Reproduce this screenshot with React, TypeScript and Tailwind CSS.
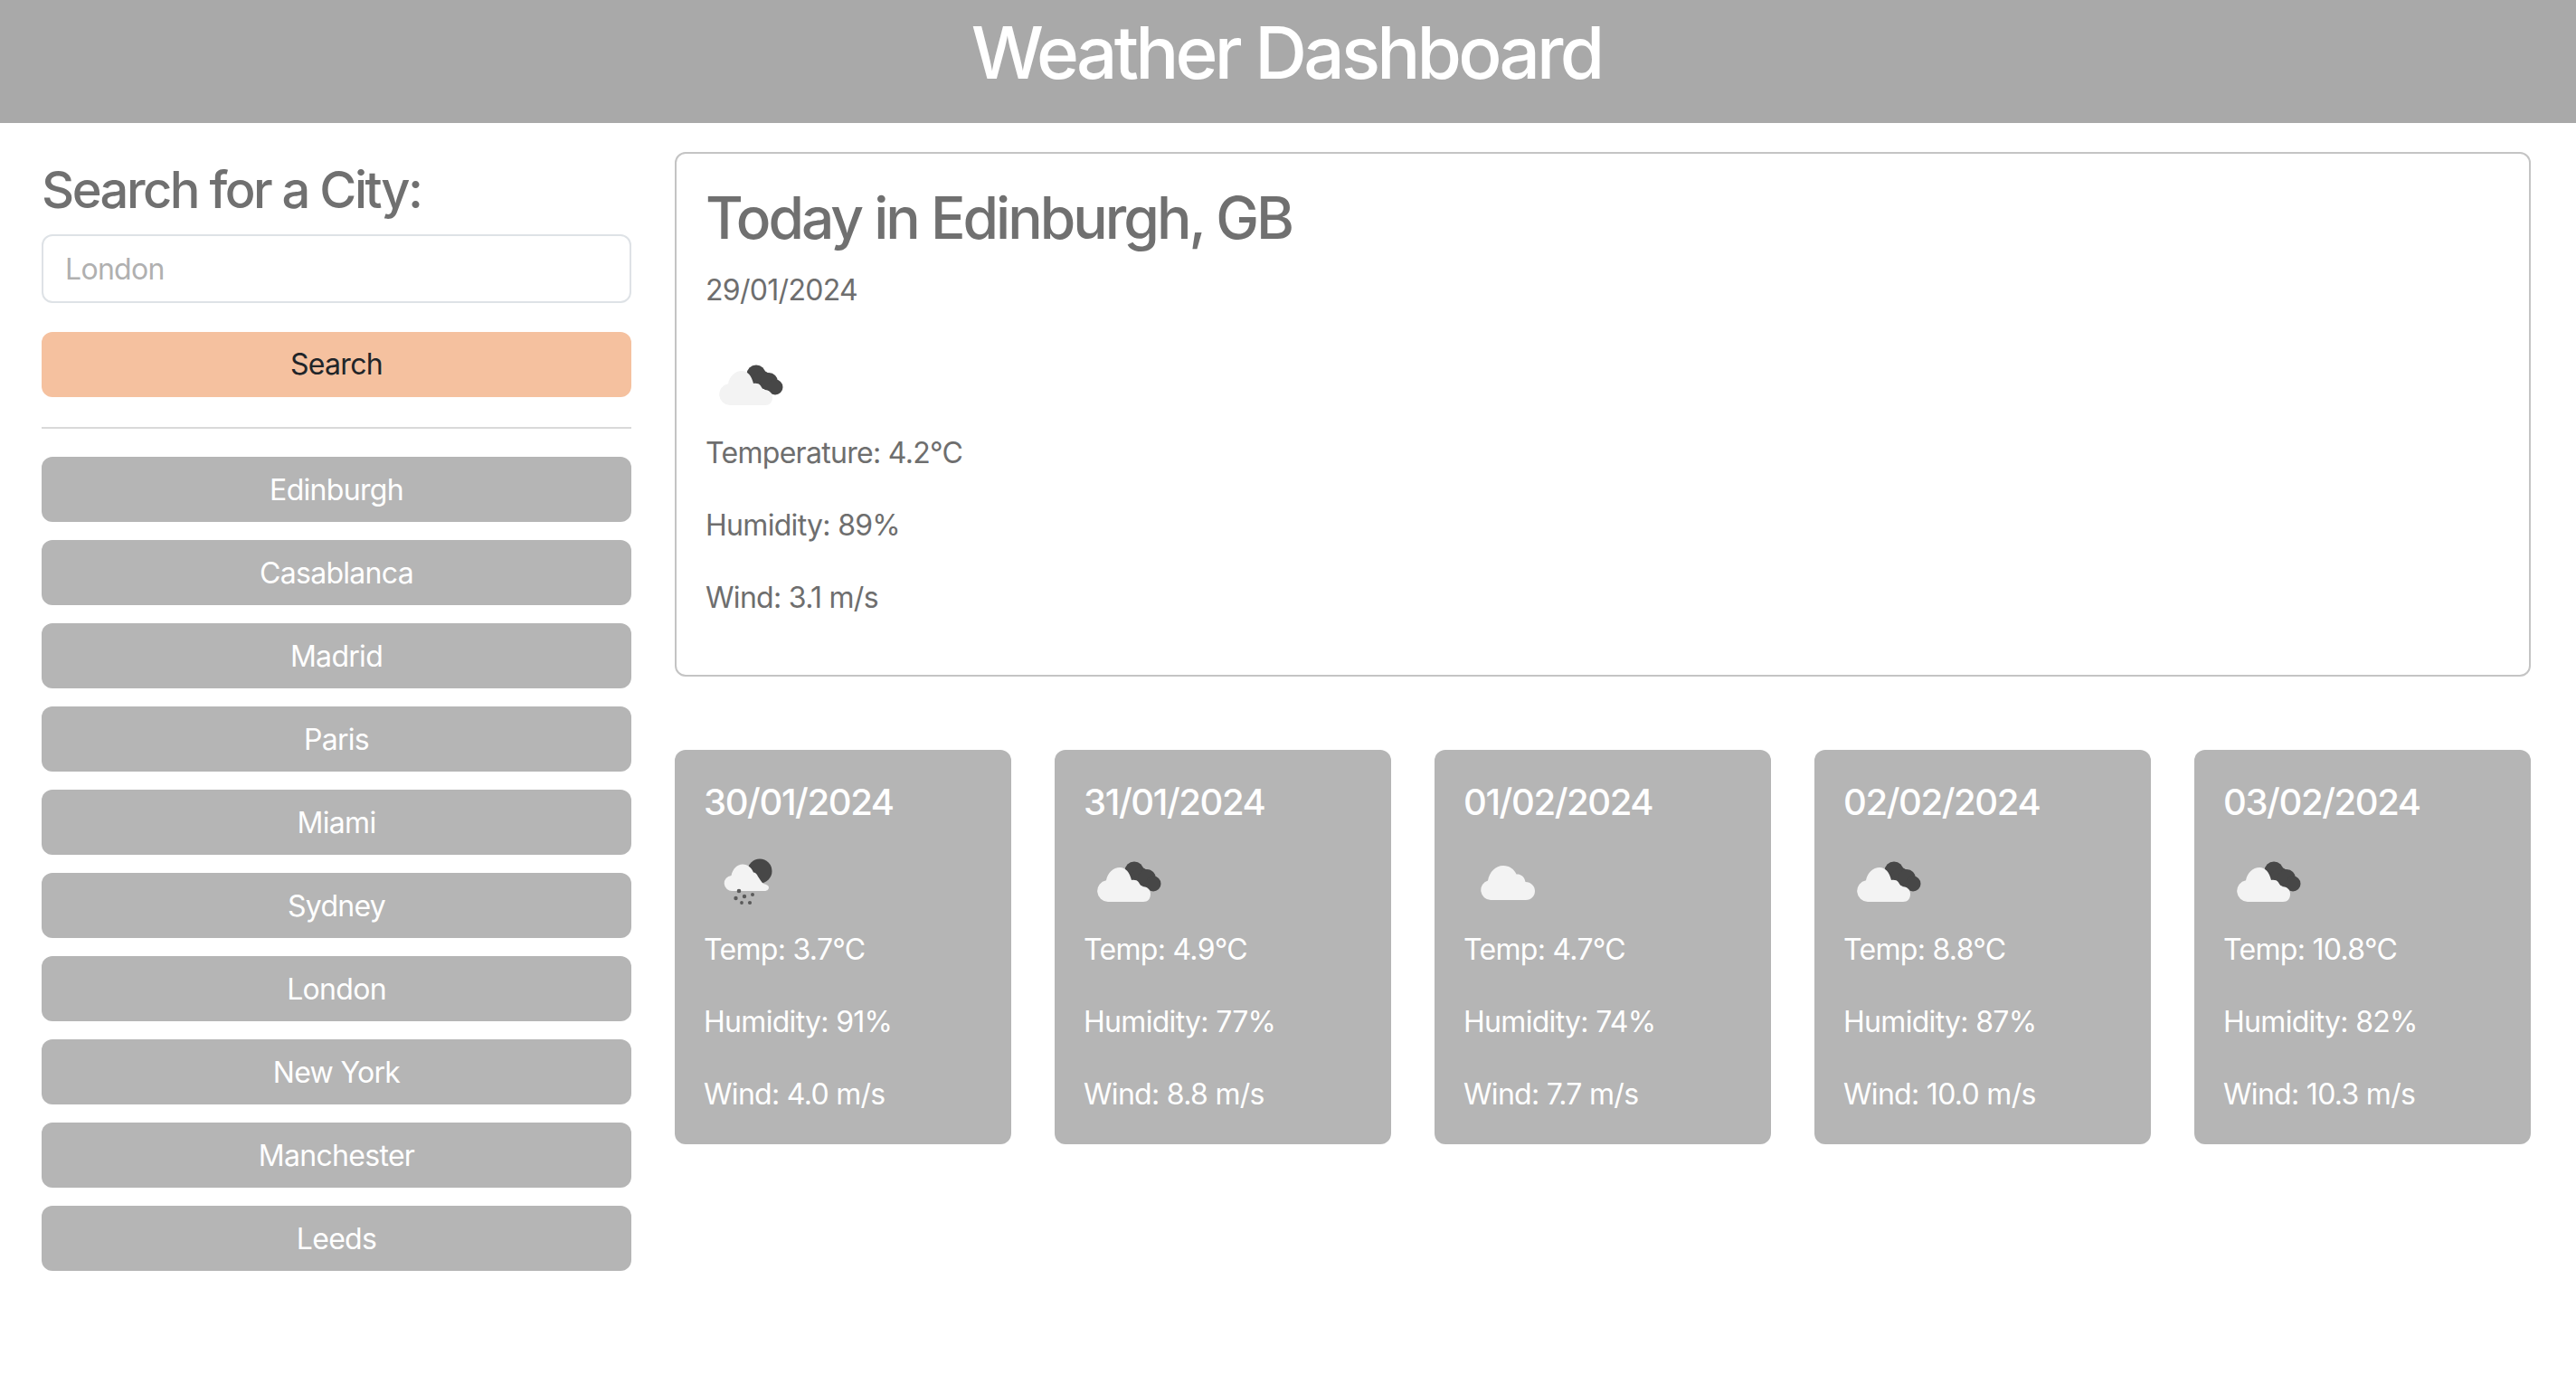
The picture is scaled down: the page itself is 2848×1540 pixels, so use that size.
const cities = ["Edinburgh","Casablanca","Madrid","Paris","Miami","Sydney","London","New York","Manchester","Leeds"];

const DARK = "#474747";

function Broken({ light = "#f3f3f3" }: { light?: string }) {
  return (
    <svg width="100" height="100" viewBox="9 -4 100 100" className="block blur-[0.5px]">
      <g fill={DARK}>
        <circle cx="65" cy="33" r="10.500" />
        <circle cx="72" cy="39" r="10" />
        <circle cx="79" cy="41" r="10" />
        <circle cx="86" cy="47" r="8.500" />
      </g>
      <path d="M36 67a12 12 0 0 1-2-23.800C35.500 35 42 29 49 29c6.500 0 11 5.500 13 14 3-.5 6.500 0 8 2.500 1 2 2.500 4.500 5 5 5 0 8 3 8 8s-3 8.500-8 8.500Z" fill={light} />
    </svg>
  );
}

function Rain() {
  return (
    <svg width="100" height="100" viewBox="9 -4 100 100" className="block blur-[0.5px]">
      <circle cx="71" cy="33" r="13.500" fill={DARK} />
      <path d="M41 55a8.500 8.500 0 0 1-1.500-17C41 30.500 46 25.500 52 25.500c6 0 10 4 12 9 2 0 4 2 5 4.500C71 42 73 45.500 75 47c4 .5 6 2.500 6 4s-1 4-5 4Z" fill="#f3f3f3" />
      <g fill="#5a5a5a">
        <circle cx="48" cy="55" r="2.300" />
        <circle cx="44.500" cy="63" r="2.200" />
        <circle cx="54" cy="61" r="2.200" />
        <circle cx="63" cy="59" r="2" />
        <circle cx="51" cy="68" r="1.900" />
        <circle cx="60" cy="68" r="2.100" />
      </g>
    </svg>
  );
}

function Few() {
  return (
    <svg width="100" height="100" viewBox="9 -4 100 100" className="block blur-[0.5px]">
      <path d="M39 65a11 11 0 0 1-3-21.500C37.500 34 44.500 27 53 27c7 0 12 4 14.500 9.500 4-.5 9 2 10 8.500 6 0 10.500 4.500 10.500 10s-4 10-10 10Z" fill="#f3f3f3" />
    </svg>
  );
}

const days = [
  { d: "30/01/2024", icon: <Rain />, t: "3.7", h: "91", w: "4.0" },
  { d: "31/01/2024", icon: <Broken />, t: "4.9", h: "77", w: "8.8" },
  { d: "01/02/2024", icon: <Few />, t: "4.7", h: "74", w: "7.7" },
  { d: "02/02/2024", icon: <Broken />, t: "8.8", h: "87", w: "10.0" },
  { d: "03/02/2024", icon: <Broken />, t: "10.8", h: "82", w: "10.3" },
];

export default function App() {
  return (
    <div className="min-h-[1540px] bg-white font-['Inter',sans-serif] text-[32px] leading-[48px] tracking-[-0.7px] text-[#6e6e6e]">
      <header className="h-[136px] bg-[#a9a9a9] pr-[4px] text-center text-[80px] leading-[116px] font-[550] tracking-[-3.8px] text-white">
        Weather Dashboard
      </header>
      <div className="flex gap-[48px] pl-[46px] pr-[50px]">
        <aside className="w-[652px] shrink-0 pt-[41px]">
          <h3 className="text-[56px] leading-[67px] font-[550] tracking-[-2.5px] text-[#707070]">Search for a City:</h3>
          <input
            readOnly
            placeholder="London"
            className="mt-[15px] block h-[76px] w-full rounded-[12px] border-2 border-[#dee2e6] bg-white px-[24px] text-[32px] tracking-[-0.7px] outline-none placeholder:text-[#b0b0b0]"
          />
          <button className="mt-[32px] block h-[72px] w-full rounded-[12px] bg-[#f5c19f] text-center text-[#212529]">Search</button>
          <hr className="mt-[33px] border-0 border-t-2 border-[#d9d9d9]" />
          <div className="mt-[31px] flex flex-col gap-[20px]">
            {cities.map((c) => (
              <button key={c} className="block h-[72px] w-full rounded-[12px] bg-[#b5b5b5] pt-[2px] text-center text-white">{c}</button>
            ))}
          </div>
        </aside>
        <main className="min-w-0 flex-1 pt-[32px]">
          <section className="h-[580px] rounded-[12px] border-2 border-[#c4c4c4] px-[32px] pt-[32px]">
            <h1 className="text-[64px] leading-[77px] font-[550] tracking-[-3px] text-[#707070]">Today in Edinburgh, GB</h1>
            <p className="mt-[18px] mb-[32px]">29/01/2024</p>
            <Broken />
            <p className="mb-[32px]">Temperature: 4.2°C</p>
            <p className="mb-[32px]">Humidity: 89%</p>
            <p>Wind: 3.1 m/s</p>
          </section>
          <section className="mt-[81px] grid grid-cols-5 gap-[48px]">
            {days.map((x) => (
              <article key={x.d} className="h-[436px] rounded-[12px] bg-[#b5b5b5] px-[32px] pt-[34px] text-white">
                <h4 className="mb-[15px] text-[40px] leading-[48px] font-[550] tracking-[-1.4px]">{x.d}</h4>
                {x.icon}
                <p className="mb-[32px]">Temp: {x.t}°C</p>
                <p className="mb-[32px]">Humidity: {x.h}%</p>
                <p>Wind: {x.w} m/s</p>
              </article>
            ))}
          </section>
        </main>
      </div>
    </div>
  );
}
